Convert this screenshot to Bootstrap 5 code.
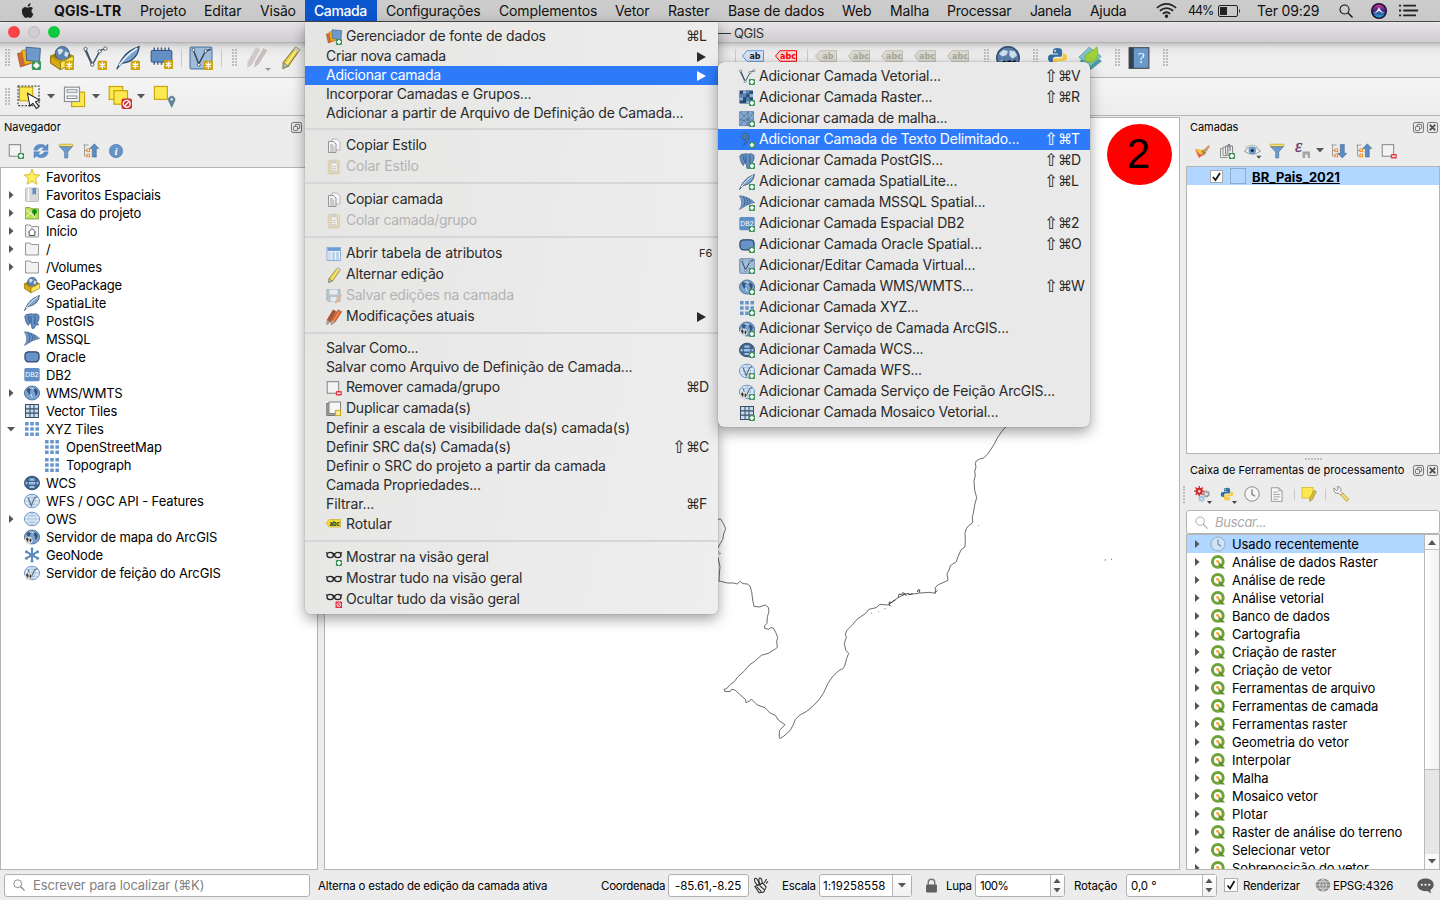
<!DOCTYPE html>
<html lang="pt-BR">
<head>
<meta charset="utf-8">
<title>QGIS</title>
<link rel="stylesheet" href="https://cdn.jsdelivr.net/npm/bootstrap@5.3.0/dist/css/bootstrap.min.css">
<style>
body{font:13px/18px Inter,"Noto Sans",sans-serif;color:#000;width:1440px;height:900px;overflow:hidden;background:#ececec}
svg{display:block;flex:none;overflow:visible}
.fit{display:inline-block;white-space:pre;flex:none}
.menubar{height:22px;background:linear-gradient(#cdcdcd,#c8c8c8);border-bottom:1px solid #4a4a4a;font-size:14px;line-height:22px;color:#111}
.menubar .on{background:#0a56cf;color:#fff;height:21px;width:72px;padding-left:9px;line-height:22px}
.titlebar{height:21px;background:linear-gradient(#e7e5e7,#cfcdcf);border-bottom:1px solid #b5b3b5;border-radius:5px 5px 0 0;color:#333}
.titlebar .fit{padding-top:2px}
.light{width:12px;height:12px;border-radius:50%;flex:none}
.tb1{height:35px;border-bottom:1px solid #b4b4b4;background:linear-gradient(#c4c4c4,#e4e4e4 5px,#efefef 14px,#ededed);padding-bottom:5px}
.tb2{height:38px;border-bottom:1px solid #b4b4b4;background:linear-gradient(#f5f5f5,#ececec)}
.lbl{margin-bottom:4px}
.grip{width:5px;height:17px;flex:none;background:radial-gradient(circle at 1px 1px,#bdbdbd .7px,transparent .9px) 0 0/3px 3px}
.vsep{width:1px;height:18px;background:#c9c9c9;flex:none}
.leftdock{width:318px}
.rightdock{width:254px}
.canvas-wrap{margin:1px 6px 0;width:856px;border:1px solid #b4b4b4;background:#fff;position:relative}
.dtitle{height:22px;font-size:11px;line-height:22px}
.ptools{height:29px;padding-bottom:3px}
.tree{background:#fff;border:1px solid #b4b4b4;overflow:hidden;min-height:0}
.trow{height:18px}
.trow.sel{background:#b1d6ff}
#layer .fit{padding-top:2px}
.searchbox{height:24px;background:#fff;border:1px solid #b4b4b4;border-radius:3px;color:#a9a9a9}
.vbar{width:15px;border-left:1px solid #b9b9b9;background:#fafafa;flex:none}
.vbar .cap{height:15px;border-bottom:1px solid #c4c4c4}
.vbar .thumb{height:220px;background:linear-gradient(90deg,#fff,#f1f1f1);border-bottom:1px solid #bbb}
.vbar .trough{background:#e6e6e6}
.status{height:30px;font-size:11.5px;line-height:30px}
.status .fit{padding-top:2px}
.status .field .fit{padding-top:1px}
.status .locator .fit{padding-top:0}
.field{height:23px;background:#fff;border:1px solid #b0b0b0;border-radius:3px;line-height:21px;flex:none}
.field .stepper{border-left:1px solid #b8b8b8;background:linear-gradient(#fff,#f1f1f1)}
.chk{width:14px;height:14px;background:#fff;border:1px solid #b0b0b0;flex:none}
.popup{position:absolute;font-size:14px;color:#2a2a2a;background:linear-gradient(100deg,#e5e5e3,#ebebeb 60%,#eee);border-radius:0 0 6px 6px;padding:4px 0;box-shadow:0 0 1px rgba(0,0,0,.5),0 5px 14px rgba(0,0,0,.38);z-index:5}
.popup .it{height:19px;padding-left:21px}
.popup .it.hi{height:21px}
.popup .fit,.popup .keys{padding-bottom:2px}
.popup .act{background:#2d7bfb;color:#fff}
.popup .dis{color:#b3b3b3}
.popup .dis svg{opacity:.55}
.popup .sp{height:12px;padding-top:5px}
.popup .sp div{height:2px;background:#d6d6d6}
.keys{font-family:Inter,"DejaVu Sans",sans-serif;display:inline-flex;align-items:center}
.keys i{font:14px/18px "DejaVu Sans",sans-serif;width:13px;text-align:center;display:inline-block}
.keys i.up{font-size:17px;width:14px}
.keys b{font-weight:400;display:inline-block}
.keys .fn{font-size:11px}
#m1{left:305px;top:22px;width:413px;height:592px}
#m2{left:718px;top:62px;width:372px;height:365px;border-radius:6px;background:#e9e9e9;z-index:6}
#m1 .keys b,#m2 .keys b{width:19px}
.step{position:absolute;left:782px;top:6px;width:65px;height:61px;border-radius:50%;background:#f00;font:42px/60px "Liberation Sans",Arial,sans-serif;text-align:center;padding-right:2px}
</style>
</head>
<body class="d-flex flex-column position-relative">
<svg width="0" height="0" class="position-absolute"><defs>
<g id="b-plus"><rect x="9.9" y="9.9" width="6.1" height="6.1" rx="1" fill="#3f935b"/><path d="M12.950 11v3.900M11 12.950h3.900" stroke="#fff" stroke-width="1.700"/></g>
<g id="b-star"><rect x="9.800" y="9.800" width="6.200" height="6.200" rx=".6" fill="#cfa30c"/><path d="M12.900 10.700v4.400M11 11.800l3.800 2.200M14.800 11.800l-3.800 2.200" stroke="#fff" stroke-width=".9"/></g>
<g id="b-min"><rect x="9.8" y="11" width="6" height="4.5" rx="1" fill="#e8384a"/><path d="M11 13.2h3.6" stroke="#fff" stroke-width="1.3"/></g>
<g id="b-ban"><rect x="9.500" y="9.500" width="6.500" height="6.500" rx=".5" fill="#e8283c"/><circle cx="12.800" cy="12.800" r="1.9" fill="none" stroke="#fff" stroke-width=".8"/><path d="M11.600 14.1l2.5-2.6" stroke="#fff" stroke-width=".8"/></g>
<g id="src"><path d="M.3 5l7-1.5 2 8-7 2.500z" fill="#cf6a35" stroke="#a04a20" stroke-width=".5"/><path d="M3 3l7-1 1 9-6 1.5z" fill="#f0b020" stroke="#b07a00" stroke-width=".5"/><path d="M6 .8L15.6 1.6 15 10.6 6.4 9.6z" fill="#6f99cb" stroke="#3a5c86" stroke-width=".6"/></g>
<g id="gpkg"><path d="M.4 6.5L7 11v4.8L.4 11.5z" fill="#dba90f" stroke="#7d5d00" stroke-width=".6"/><path d="M15.6 6.5L7 11v4.8l8.6-4.5z" fill="#fbe74d" stroke="#8c7a10" stroke-width=".6"/><path d="M.4 6.5L4 4.500h8l3.600 2L7 11z" fill="#a87f08"/><circle cx="8.2" cy="5" r="4.7" fill="#5c82af" stroke="#2f4e73" stroke-width=".5"/><path d="M5 2.5l2.5-.8L9 3 7.5 5 6 6zM10 3.5l2.5 1-1 3-2-1z" fill="#d5e2ee"/><path d="M.4 6.500L7 11l8.600-4.500L11 8.500 7.200 9.800 4.500 8.500z" fill="#dba90f"/></g>
<g id="vec"><path d="M2 2.6l4.2 10L11.2 3.4Q12.5 2.2 15 2" fill="none" stroke="#41576a" stroke-width="1"/><path d="M1.6 3l4.6 9.6" stroke="#41576a" stroke-width="1.2"/><g fill="#fff" stroke="#41576a" stroke-width=".6"><circle cx="1.7" cy="2" r="1.1"/><circle cx="11" cy="3.6" r="1.1"/><circle cx="14.9" cy="1.7" r="1.1"/><circle cx="6.2" cy="12.4" r="1.1"/></g></g>
<g id="fea"><path d="M.5 15.5Q3 10 4.5 8 8 3 15.4.4 15 5 12 8 9 11 4 11.5 2 13 .5 15.5z" fill="#7da3cf" stroke="#2d4b6c" stroke-width=".8"/><path d="M2 13Q7 6 14 1.5" fill="none" stroke="#e9f1f8" stroke-width="1"/></g>
<g id="chip"><path d="M3 1v12M5.5 1v12M8 1v12M10.500 1v12M13 1v12" stroke="#3a5f8e" stroke-width="1"/><rect x=".8" y="3.2" width="14.4" height="8" rx="1" fill="#6290c4" stroke="#34567f" stroke-width=".7"/></g>
<g id="virt"><rect x=".7" y=".7" width="14.6" height="14.6" rx=".8" fill="#9fbcda" stroke="#5b7ea5" stroke-width=".8"/><path d="M3 3l3.500 9L11 3.500l3.500-1.300" fill="none" stroke="#31465a" stroke-width="1"/><g fill="#fff" stroke="#41576a" stroke-width=".6"><circle cx="3" cy="2.6" r="1"/><circle cx="11" cy="3.400" r="1"/><circle cx="6.500" cy="12.500" r="1"/></g></g>
<g id="pen"><path d="M11.500.8l3 1.700L6.500 14l-3.700 1.600L3 11.500z" fill="#e8d44b" stroke="#8b7b24" stroke-width=".7"/><path d="M12.800 1.800L5 13" stroke="#fff5a0" stroke-width=".8"/><path d="M11.500.8l3 1.700-1.300 1.800-3-1.700z" fill="#ccc"/><path d="M3 11.500L2.800 15.600l3.700-1.600z" fill="#b8b8a8" stroke="#666" stroke-width=".4"/></g>
<g id="pens"><path d="M7 .9l3 1.500L4.200 13l-3.400 2.500.3-4.500z" fill="#b35532" stroke="#7c3a20" stroke-width=".5"/><path d="M12 .9l3.500 1.800L9 13l-4 2.800L6 11z" fill="#e8662f" stroke="#8f3a12" stroke-width=".6"/><path d="M13 2.500L7.200 13" stroke="#ff9b5a"/><path d="M6 11l-1 4.800L9 13zM1.100 11l-.3 4.500L4 13z" fill="#aaa"/></g>
<g id="gpens"><path d="M7 .9l3 1.500L4.200 13l-3.400 2.500.3-4.500z" fill="#cfc9c7"/><path d="M12 .9l3.500 1.800L9 13l-4 2.800L6 11z" fill="#c5c0be" stroke="#fff" stroke-width=".5"/></g>
<g id="sel"><rect x=".7" y=".7" width="14" height="13" fill="none" stroke="#444" stroke-width=".8" stroke-dasharray="1.300 .9"/><rect x="1.700" y="1.500" width="8.800" height="9" fill="#fce94f" stroke="#c9a50c" stroke-width=".7"/><path d="M7 5.500l1.600 8.500 2-1.800 2.300 3.400 1.700-1.200-2.300-3.300 2.700-1z" fill="#fff" stroke="#222" stroke-width=".7"/></g>
<g id="form"><rect x="6" y="5" width="9" height="10" fill="#fce94f" stroke="#c9a50c" stroke-width=".8"/><rect x="1" y="1.500" width="10.500" height="10" fill="#f4f4f4" stroke="#888f94" stroke-width=".8"/><path d="M2.500 4.200h7.500M2.500 8.500h7.500" stroke="#868d92" stroke-width="2.400"/><path d="M3.200 4.200h6.100M3.200 8.500h6.100" stroke="#fff" stroke-width="1"/></g>
<g id="desel"><rect x=".8" y="1" width="9" height="8.600" fill="#fce94f" stroke="#c9a50c" stroke-width=".8"/><rect x="4" y="3.800" width="9" height="9" fill="#fce94f" stroke="#c9a50c" stroke-width=".8"/><rect x="9" y="9" width="7" height="7" rx="1.400" fill="#d52b2b"/><circle cx="12.500" cy="12.500" r="2.300" fill="none" stroke="#fff" stroke-width=".9"/><path d="M11 14l3-3" stroke="#fff" stroke-width=".9"/></g>
<g id="loc"><rect x="1" y="1" width="9" height="9" fill="#fce94f" stroke="#c9a50c" stroke-width=".8"/><path d="M13 15.500L10.900 11a2.300 2.300 0 1 1 4.200 0z" fill="#64839a" stroke="#466478" stroke-width=".4"/><circle cx="13" cy="10" r=".8" fill="#fff"/></g>
<path id="dn" d="M0 0h8L4 4.500z" fill="#555"/>
<g id="newl"><rect x="1.200" y="1.700" width="11.500" height="11.500" fill="#f3f3f3" stroke="#777" stroke-width=".9"/></g>
<g id="ref"><path d="M.8 7.200Q1.500 1.500 7.800 1.300q3 0 4.700 1.700L15 1v6.300H8.800L10.900 5Q8 3 5.300 6 4.700 7.200 4 7.200zM15.200 8.800q-.7 5.700-7 5.900-3 0-4.700-1.700L1 15V8.700h6.200L5.100 11q2.900 2 5.600-1 .6-1.200 1.300-1.200z" fill="#5b90cb" stroke="#4377b1" stroke-width=".4"/></g>
<g id="fun"><path d="M1.200 1.200h13.600v2.300H1.200z" fill="#f7e463" stroke="#b19a20" stroke-width=".6"/><path d="M1.700 3.700h12.600L9.800 9v6l-3.200 0V9z" fill="#6d9ac9" stroke="#4c759f" stroke-width=".6"/></g>
<g id="colup"><path d="M.5 2h5M1.500 2v11h3M1.500 7.500h3" fill="none" stroke="#8a8a8a" stroke-width=".8"/><g fill="#fff" stroke="#f08a1c"><rect x="4" y="6" width="2.600" height="2.600"/><rect x="4" y="11.200" width="2.600" height="2.600"/></g><path d="M11.300.8l4.500 4.700h-2.500V14h-4V5.500H6.800z" fill="#5b8cc3" stroke="#33587f" stroke-width=".5"/></g>
<g id="exdn"><path d="M.5 2h5M1.500 2v11h3M1.500 7.500h3" fill="none" stroke="#8a8a8a" stroke-width=".8"/><g fill="#fff" stroke="#f08a1c"><rect x="4" y="6" width="2.600" height="2.600"/><rect x="4" y="11.200" width="2.600" height="2.600"/></g><path d="M11.300 15l4.500-4.700h-2.500V1.500h-4v8.800H6.800z" fill="#5b8cc3" stroke="#33587f" stroke-width=".5"/></g>
<g id="info"><circle cx="8" cy="8" r="6.700" fill="#6593c8" stroke="#4c78aa" stroke-width=".6"/><text x="8" y="12" font-family="Liberation Serif" font-size="11" font-weight="700" font-style="italic" fill="#fff" text-anchor="middle">i</text></g>
<path id="fav" d="M8 .3l2.200 5.300 5.600.4-4.300 3.700 1.400 5.600L8 12.300l-4.900 3 1.400-5.600L.2 6l5.600-.4z" fill="#fcee5a" stroke="#c4a31a" stroke-width=".7"/>
<g id="book"><rect x="1.500" y="1" width="13" height="13.500" rx="1" fill="#d9d9d9" stroke="#a9a9a9" stroke-width=".7"/><path d="M4.500 1v13" stroke="#fff" stroke-width="1.300"/><path d="M8.500 1h3.500v7L10.250 6.500 8.500 8z" fill="#5d8cc2"/></g>
<g id="proj"><path d="M1.500 14V2.500h4.500l1 1.200h7.500V14z" fill="#b9de52" stroke="#6b9422" stroke-width=".7"/><path d="M2 5l5 3 4 5M7 8l-5 4" stroke="#fff" fill="none" stroke-width=".8"/><circle cx="10.500" cy="6.500" r="2.500" fill="#159a1e"/><path d="M10.500 6v4.500" stroke="#0d6b14"/></g>
<path id="fold" d="M1.500 14V2h4.800l1 1.500h7.200V14z" fill="#f2f2f2" stroke="#7f7f7f" stroke-width=".8"/>
<g id="home"><use href="#fold"/><path d="M4.300 9.300L8 5.500l3.700 3.800M5.200 9v3.500h5.600V9" fill="#fff" stroke="#444" stroke-width=".9"/></g>
<g id="pg"><path d="M.8 3Q2 .7 5 1.200 7 .3 9 1.200 13-.2 15 2.500q.8 4-2.300 8.300l2 .3q-1.500 1.500-3.400 1l-.8 3-2.500.3-.8-5Q6 11 5.500 9.500l-1 3Q1.500 10 .8 3z" fill="#6290c4" stroke="#3a5c86" stroke-width=".8"/><path d="M5 2.500Q4 6 5.500 9M10.500 2.500q1.500 3 .3 6.500l-.3 2M7 3.500v6" fill="none" stroke="#27456a" stroke-width=".7"/></g>
<g id="ms"><path d="M.5.800Q8 1 15.700 7.500 9 8.500.5 14.500 5 8 .5.800z" fill="#6c97c8" stroke="#3f648f" stroke-width=".6"/><path d="M4 1.200q3.500 5 .5 10.500M7 2.200q3 4 .8 8M10 3.800q2 3 .7 5" fill="none" stroke="#2d4e74" stroke-width=".7"/></g>
<rect id="ora" x="1" y="2.800" width="14" height="10" rx="3.500" fill="#6793ca" stroke="#2b4765" stroke-width="1.300"/>
<g id="db2"><rect x=".3" y="1" width="15.400" height="13.300" rx="1.500" fill="#5f8fc6"/><text x="8" y="10" font-family="Inter" font-size="6.800" fill="#fff" text-anchor="middle">DB2</text></g>
<g id="wms"><ellipse cx="8" cy="8" rx="7.600" ry="7" fill="#7aa2d0" stroke="#41658e" stroke-width=".8"/><path d="M2.500 5Q4 2.500 7 2.800L7.500 4 6 5.500 6.200 8 5.300 10 4 7.500zM9.500 5l2-1.800 2.500 3-1 3.300-1.500 1.500-.5-3z" fill="#35547b"/><path d="M5.500 3.300q3-1.300 4 1M6.800 9l1.500 3.500" stroke="#d8e7f5" fill="none"/></g>
<g id="vt"><rect x="1" y="1" width="14" height="14" fill="#3b4e62"/><path d="M2 2h3.500v3.300H2zM6.500 2h3v3.300h-3zM10.500 2H14v3.300h-3.500zM2 6.500h3.500v3H2zM6.500 6.500h3v3h-3zM10.500 6.500H14v3h-3.500zM2 10.700h3.500V14H2zM6.500 10.700h3V14h-3zM10.500 10.700H14V14h-3.500z" fill="#c6dcf2"/></g>
<path id="xyz" d="M1 1h3.600v3.600H1zM6.200 1h3.600v3.600H6.200zM11.400 1H15v3.600h-3.600zM1 6.200h3.600v3.600H1zM6.200 6.200h3.600v3.600H6.200zM11.400 6.200H15v3.600h-3.600zM1 11.400h3.600V15H1zM6.200 11.400h3.600V15H6.200zM11.400 11.400H15V15h-3.600z" fill="#6796cb"/>
<g id="wcs"><ellipse cx="8" cy="8" rx="7.500" ry="6.800" fill="#41658f" stroke="#2d4864" stroke-width=".9"/><path d="M5.500 3.500h5v2.300h-5zM4.800 7h6.400v2.600H4.800zM5.500 11h5v2h-5zM1.500 7h2v2.300h-2zM12.500 7h2v2.300h-2z" fill="#9ec2e6"/></g>
<g id="ows"><ellipse cx="8" cy="8" rx="7.500" ry="6.800" fill="#e4eef9" stroke="#5e89bb" stroke-width=".9"/><path d="M.8 8h14.400M2 4.700h12M2 11.300h12M8 1.200v13.600M8 1.200q-7 6.800 0 13.600M8 1.200q7 6.800 0 13.600" fill="none" stroke="#8fb1d8" stroke-width=".6"/></g>
<g id="wfs"><use href="#ows"/><path d="M4 4.500l3.300 8L10.500 5l2.500-1.500" fill="none" stroke="#5a6c7d" stroke-width="1.100"/></g>
<g id="ags"><use href="#wms"/><circle cx="4.600" cy="11.300" r="3.700" fill="#ddd"/><path d="M1.800 9.800l2-1.500.8 2.500-.8 2.500zM6 9l1.700 1.800-1.200 2.800-1-1.500z" fill="#333"/></g>
<g id="agf"><use href="#wfs"/><circle cx="4.600" cy="11.300" r="3.700" fill="#ddd"/><path d="M1.800 9.800l2-1.500.8 2.500-.8 2.500zM6 9l1.700 1.800-1.200 2.800-1-1.500z" fill="#333"/></g>
<g id="gn"><path d="M8 .8v14.400M1.700 4.300l12.600 7.400M14.300 4.300L1.700 11.700" stroke="#5f8cbd" stroke-width="2"/><g fill="#5f8cbd"><circle cx="8" cy="8" r="2.500"/><circle cx="8" cy="2" r="1.500"/><circle cx="8" cy="14" r="1.500"/><circle cx="2.400" cy="4.800" r="1.500"/><circle cx="13.600" cy="4.800" r="1.500"/><circle cx="2.400" cy="11.200" r="1.500"/><circle cx="13.600" cy="11.200" r="1.500"/></g></g>
<g id="ras"><rect x=".5" y=".5" width="13.500" height="13" fill="#2b4a73"/><path d="M4 .5h3.300v3.300H4zM10.600 4h3.400v3.300h-3.400zM.5 7.300H4v3.300H.5zM7.300 10.500h3.300v3H7.300z" fill="#8fb4dc"/><path d="M7.300.5h3.300v3.300H7.300zM4 4h3.300v3.300H4zM7.300 7.300h3.300v3.200H7.300zM.5 4H4v3.300H.5z" fill="#5982b2"/></g>
<g id="mesh"><rect x=".7" y=".7" width="14" height="14" fill="#84a9d2" stroke="#55789f" stroke-width=".7"/><path d="M.7 9h14M9 .7v14M1 1l8 8 5.500-8M9 1L1 9M1 14l4-5 4 5.500" fill="none" stroke="#47698f" stroke-width=".7"/></g>
<path id="csv" d="M3.500 2Q7.500-.5 9.500 3.500q2 5.500-5 9.800 2.700-4 2.300-6Q3.200 8 2.600 5 2.500 3 3.500 2z" fill="#4a78ad" stroke="#2d4f78" stroke-width=".6"/>
<g id="copy"><path d="M6 1h5l3 3v8H6z" fill="#f6f6f6" stroke="#aaa" stroke-width=".8"/><path d="M2.500 3.500h5l2.500 2.500v8.500H2.500z" fill="#f3f3f3" stroke="#8a8a8a" stroke-width=".9"/><path d="M4 7h3M4 9h4.500M4 11h4.500M4 13h4.500" stroke="#999" stroke-width=".9"/></g>
<g id="paste"><rect x="2.300" y="1.500" width="11" height="13.500" rx="1" fill="#ead09a" stroke="#c9aa6a" stroke-width=".8"/><path d="M5 3.500h4l2.500 2.500v7H5z" fill="#f5f5f5" stroke="#999" stroke-width=".7"/><rect x="5.500" y=".5" width="4.600" height="2.500" fill="#bbb"/><path d="M6 7.500h4M6 9.500h4M6 11.500h4" stroke="#aaa" stroke-width=".8"/></g>
<g id="tab"><rect x="1" y="1.500" width="13.500" height="13" fill="#edf3fa" stroke="#7ba0cf" stroke-width=".8"/><rect x="1.500" y="2" width="12.500" height="3" fill="#6e9fd8"/><path d="M2.500 7h2M6 7h3M10 7h3M2.500 9h2M6 9h3M10 9h3M2.500 11h2M6 11h3M10 11h3M2.500 13h2M6 13h3M10 13h3" stroke="#8fb2dc" stroke-width="1"/></g>
<g id="save"><path d="M.8 1.500H14v12H2.500L.8 12z" fill="#8fa9bb" stroke="#6d8798" stroke-width=".8"/><path d="M3.500 1.500h8v5h-8zM4.500 9h6v4.500h-6z" fill="#e5ecf0"/><path d="M14 6l2 1-4.500 7.500L9 16l.5-3z" fill="#ea8a5a"/></g>
<g id="dup"><rect x=".8" y="2.500" width="10" height="12" fill="#a3a59a" stroke="#555" stroke-width=".7"/><rect x="3" y="1" width="11.500" height="11.500" fill="#f6f6f6" stroke="#777" stroke-width=".9"/><rect x="9.500" y="9.500" width="5" height="5" fill="#fbf0a8" stroke="#d2ad14" stroke-width="1.200"/></g>
<g id="tag"><path d="M.3 6.300L3 2.500h11.500v7.500H3z" fill="#f1de35" stroke="#c0a51c" stroke-width=".6"/><text x="8.700" y="8.500" font-family="Inter" font-weight="800" font-size="5.500" text-anchor="middle" fill="#333">abc</text></g>
<g id="spec"><g fill="none" stroke="#222" stroke-width="1.300"><ellipse cx="4.200" cy="5" rx="3.200" ry="2.600"/><ellipse cx="11.800" cy="5" rx="3.200" ry="2.600"/><path d="M7 4q1-.8 2 0M0 2.500l1.700 1M16 2.500l-1.700 1"/></g></g>
<g id="spec2"><g transform="translate(0 3)"><use href="#spec"/></g></g>
<g id="brush"><path d="M1 6l5 1 3 5-4 3Q3 11 1 6z" fill="#ee5a4c"/><path d="M1 6l6 .5 2 4-3 1z" fill="#f6c83a"/><path d="M7 7.500l3-1 2.500 2.500-3 4z" fill="#b98746"/><path d="M9 8l5.500-5.500 1 1L11 10z" fill="#d0a468" stroke="#8a5f28" stroke-width=".4"/></g>
<g id="grp"><path d="M1.500 5.500v9h7M4 4v8.500h6M4 5.500H1.500M6.500 4H4" fill="none" stroke="#888" stroke-width=".9"/><path d="M6.500 3h7v8h-7z" fill="#eee" stroke="#777" stroke-width=".9"/><path d="M8.800 10V2.500Q9.900-.5 11 2.500V8" fill="none" stroke="#4b5b68" stroke-width=".9"/></g>
<g id="eye"><path d="M.3 8.500Q7 .8 15.500 8.500 8 14.500.3 8.500z" fill="#f5f5f5" stroke="#8f8f8f" stroke-width=".9"/><circle cx="7.800" cy="8" r="3.500" fill="#6a9bd0"/><circle cx="7.800" cy="8" r="1.500" fill="#1d2f44"/><path d="M1 5.500Q7 .5 13.500 5" fill="none" stroke="#aaa" stroke-width=".7"/><path d="M11.500 13h5L14 15.800z" fill="#555"/></g>
<g id="eps"><text x="0" y="9" font-family="Liberation Serif" font-size="18" font-style="italic" fill="#6c3f78" stroke="#6c3f78" stroke-width=".4">ε</text><path d="M7.500 8.500H15V15h-2.200v-3.500h-2.600V15H7.500z" fill="#a5a5a5"/></g>
<g id="py"><path d="M8 .8Q4.500.8 4.500 3v2h4v.8H3Q.8 5.800.8 8.500t2.200 3h1.500V9.500Q4.500 7.500 6.500 7.500H10q1.500 0 1.500-1.500V3Q11.500.8 8 .8z" fill="#376fa2"/><path d="M8 15.300q3.500 0 3.500-2v-2h-4v-.8H13q2.200 0 2.200-2.700T13 4.800h-1v2q0 2-2 2H6.200Q4.500 8.800 4.500 10.300v3q0 2 3.500 2z" fill="#fccd3c"/><circle cx="6.200" cy="2.900" r=".7" fill="#fff"/></g>
<g id="gear"><g stroke="#d02a2a"><circle cx="5.200" cy="5.200" r="2.500" fill="none" stroke-width="2"/><path d="M5.200 0v10.400M0 5.200h10.400M1.500 1.500l7.400 7.400M8.900 1.500L1.500 8.900" stroke-width="1.300"/></g><circle cx="5.200" cy="5.200" r="1.200" fill="#eee"/><circle cx="12.300" cy="8" r="2.400" fill="none" stroke="#8f8f8f" stroke-width="2" stroke-dasharray="1.500 .4"/><circle cx="7.500" cy="12.800" r="2" fill="none" stroke="#8fb3dc" stroke-width="2" stroke-dasharray="1.400 .4"/></g>
<g id="clk"><circle cx="8" cy="8" r="7.200" fill="#f5f5f5" stroke="#8b8b8b" stroke-width="1"/><path d="M8 3.500V8.300l3 2" fill="none" stroke="#7b7b7b" stroke-width="1.300"/></g>
<g id="clkb"><circle cx="8" cy="8" r="7" fill="#cfe3f7" stroke="#8ea5bb" stroke-width=".9"/><path d="M8 3.500V8.300l3 2" fill="none" stroke="#71879c" stroke-width="1.100"/></g>
<g id="doc"><path d="M2.500.8h8l3.500 3.500v11h-11.500z" fill="#f7f7f7" stroke="#8d8d8d" stroke-width=".9"/><path d="M10.500.8v3.500H14M4.500 5.500h5M4.500 8h7.500M4.500 10.500h7.500M4.500 13h5" fill="none" stroke="#999" stroke-width=".9"/></g>
<g id="note"><rect x="1" y="1.500" width="11" height="10.500" fill="#fce94f" stroke="#cdb22a" stroke-width=".7"/><path d="M13 4.500l2.300 1-4 8-2.500 2-.2-3z" fill="#d9c042" stroke="#93822a" stroke-width=".6"/></g>
<g id="wr"><path d="M.8 1.800L3.500 4.500 5 3.500 4.500.500Q8.500.500 8 5.500L10 7.500 8 9.500 6 7.500Q0 7.500.8 1.800z" fill="#f1f1f1" stroke="#7b7b7b" stroke-width=".8"/><path d="M7.800 9.200l2-2 6 6-2 2.200z" fill="#f5dd6b" stroke="#a38a2d" stroke-width=".7"/></g>
<g id="q"><circle cx="7.800" cy="7.800" r="5.400" fill="#fff" stroke="#6fa336" stroke-width="3"/><path d="M9.500 8.500l5.500 6h-4L8.500 11z" fill="#5c9130"/><path d="M7 7l1.500-.3L10 9.300l-1.500 1z" fill="#f08e2a"/><circle cx="7.400" cy="7.300" r="1.300" fill="#f5a62b"/></g>
<g id="leaf"><path d="M1 10L8 5l8 5-7.500 6z" fill="#4e9ba1"/><path d="M.6 7.500L7.500.8 15.500 7 8.500 13.500z" fill="#7fc4c9" stroke="#4c979d" stroke-width=".5"/><path d="M5 10Q3.500 6 8 4 11 2.500 12.500.5q2 6-1 9-3 2.500-6.500.5z" fill="#9fd13a" stroke="#6fa31d" stroke-width=".4"/></g>
<g id="globe"><circle cx="8" cy="8" r="7.500" fill="#5a7fac" stroke="#2d4764" stroke-width=".9"/><path d="M2 5l3-2.500 3 1-1 2.500-3 1zM9 3l3.500.5 1.500 3-3 2-2-2zM3 9l3 1v3z" fill="#cfdeec"/><path d="M3.500 11l1.500-1.500 2 1 2-1 2 1 2-1.500V13H4z" fill="#111"/></g>
<g id="help"><rect x=".8" y=".5" width="14.400" height="15" fill="#6b97c9" stroke="#444c55" stroke-width=".8"/><path d="M.8.5h3.400v15H.8z" fill="#32424f"/><text x="9.700" y="11.800" font-family="Liberation Serif" font-size="11" fill="#fff" text-anchor="middle">?</text></g>
<g id="mag" fill="none" stroke="currentColor"><circle cx="6.300" cy="6.300" r="5.200" stroke-width="1.200"/><path d="M10 10l5.500 5.500" stroke-width="1.500"/></g>
<g id="wifi" fill="none" stroke="#222" stroke-width="1.700"><path d="M-1 5.500q9-7.500 18 0M1.800 8.300q6.200-5 12.400 0M4.600 11q3.400-2.700 6.800 0"/><circle cx="8" cy="13.300" r=".8" fill="#222"/></g>
<path id="apple" d="M11.300.3q.1 1.500-.8 2.600T8.200 4Q8 2.600 9 1.500 10 .4 11.300.3zM14.200 11.700Q13.400 14 12.300 15.200q-1 1-2.200.4-1.700-.8-3.300 0-1.200.6-2.200-.4Q1.400 11.500 2 7.500 2.700 4.700 5.200 4.300q1.200 0 2.400.6.600.2 1.300-.1Q12 3.300 13.900 5.600q-1.900 1.200-1.700 3.300.2 2 2 2.800z" fill="#222"/>
<g id="rabbit" fill="#eee" stroke="#222" stroke-width="1.100"><ellipse cx="4" cy="4" rx="1.700" ry="4" transform="rotate(-28 4 4)"/><ellipse cx="8" cy="3.500" rx="1.600" ry="3.600" transform="rotate(-12 8 3.500)"/><path d="M2 9l8.500-3.500 3.500 4-2.500 5.500-5 .8z"/><path d="M4 9.500l5 5M7 8l5 4.500M12 5l2.500-4M14 6l2-2.500" fill="none"/></g>
<g id="lock"><path d="M4.500 8V4.800a3.500 3.500 0 0 1 7 0V8" fill="none" stroke="#777" stroke-width="1.500"/><rect x="2.200" y="7" width="11.600" height="8.500" rx="1" fill="#606060"/></g>
<g id="crs"><ellipse cx="8" cy="8" rx="7.300" ry="6.500" fill="#858585"/><path d="M.7 8h14.600M2 4.800h12M2 11.200h12M8 1.500v13M8 1.500q-7 6.500 0 13M8 1.500q7 6.500 0 13" fill="none" stroke="#e2e2e2" stroke-width=".8"/></g>
<g id="chat"><path d="M8 1.500c4.500 0 7.700 2.500 7.700 5.900 0 2.200-1.200 3.800-3.200 4.800l.8 3.300-3.500-2.300C4 13.900.3 11.200.3 7.400.3 4 3.500 1.500 8 1.500z" fill="#5a5a5a"/><g fill="#fff"><circle cx="4.500" cy="7.300" r="1"/><circle cx="8" cy="7.300" r="1"/><circle cx="11.500" cy="7.300" r="1"/></g></g>
<g id="float"><rect x=".7" y=".7" width="14.600" height="14.600" rx="2.500" fill="none" stroke="#666" stroke-width="1.300"/><rect x="6" y="3.500" width="6.500" height="6" rx="1" fill="none" stroke="#666" stroke-width="1.300"/><rect x="3.500" y="6.500" width="6" height="6" rx="1" fill="#ececec" stroke="#666" stroke-width="1.300"/></g>
<g id="close"><rect x=".7" y=".7" width="14.600" height="14.600" rx="2.500" fill="none" stroke="#666" stroke-width="1.300"/><path d="M4 4l8 8M12 4l-8 8" stroke="#555" stroke-width="2.600"/></g>
<linearGradient id="sg" x1="0" y1="0" x2="0" y2="1"><stop offset="0" stop-color="#d0329a"/><stop offset=".5" stop-color="#3a2a80"/><stop offset="1" stop-color="#25b2e0"/></linearGradient>
<g id="siri"><circle cx="8" cy="8" r="8" fill="#1b1233"/><circle cx="8" cy="8" r="6.400" fill="url(#sg)"/><path d="M2.500 10Q6 9 8 4q2 5 5.500 6Q10 10 8 8q-2 2-5.500 2z" fill="#d8f3ff"/></g>
<g id="lst" stroke="#222" stroke-width="1.700"><path d="M0 3.500h2M0 8h2M0 12.500h2M4 3.500h12M4 8h14M4 12.500h12"/></g>
</defs></svg>

<nav class="menubar d-flex flex-shrink-0" id="bar"></nav>
<div class="titlebar d-flex align-items-center flex-shrink-0" id="title"></div>
<div class="tb1 d-flex align-items-center flex-shrink-0" id="t1"></div>
<div class="tb2 d-flex align-items-center flex-shrink-0" id="t2"></div>

<main class="d-flex" style="height:754px">
  <aside class="leftdock d-flex flex-column">
    <div class="dtitle d-flex align-items-center" id="lt"></div>
    <div class="ptools d-flex align-items-center" id="lp"></div>
    <div class="tree flex-grow-1" id="nav"></div>
  </aside>
  <section class="canvas-wrap">
    <svg width="854" height="751" viewBox="325 118 854 751">
      <g transform="translate(700 420) scale(.33333)" fill="none" stroke="#555" stroke-width="2.600" stroke-linejoin="round">
        <path d="M920 18L905 35 893 52 883 72 872 89 862 103 851 114 839 117 829 123 826 130 828 141 824 155 826 165 822 184 824 210 830 233 824 255 820 280 817 290 818 308 806 317 799 326 795 340 796 362 795 380 783 390 774 410 769 425 751 437 747 450 741 462 744 481 729 488 715 494 706 502 706 520 690 517 660 519 634 523 618 521 600 530 584 540 570 551 560 555 540 553 528 563 507 568 497 580 472 597 455 617 441 631 436 642 439 652 433 670 437 690 446 700 440 715 435 735 430 745 415 753 397 771 384 790 371 818 358 838 341 856 320 874 300 885 286 898 280 914 270 932 252 948 240 956 238 952 238 932 255 914 246 908 235 900 226 886 210 879 195 863 172 855 154 837 149 843 138 848 136 838 118 822 105 810 94 808 90 815 74 814 72 808 80 806 90 794 103 785 112 772 134 752 148 735 163 725 184 706 205 700 226 687 232 682 230 665 233 652 227 637 220 624 212 623 206 628 194 625 194 617 201 610 202 590 207 575 205 562 196 555 178 561 162 559 158 540 155 515 150 498 142 492 129 491 120 484 112 492 100 489 82 489 62 484 57 484 59 450 60 440 54 412"/>
        <path d="M54 384L61 370 68 359 71 342 77 326 70 310 62 297 54 298M54 394l4 4M57 402l5-2"/>
        <path d="M568 558l0-12 8 2 4-6 6 0M594 532l4-10 6 2 4-6 8 4 3 6M606 526l8-4M622 520l8 4 8-4M652 516l2-6 6 0-3 8M704 518l8-6" stroke="#333"/>
        <path d="M835 316l2 2M1214 420h4M1233 418h3M514 580h2M535 574h2M553 566h3M568 557h4"/>
      </g>
    </svg>
    <div class="step">2</div>
  </section>
  <aside class="rightdock d-flex flex-column">
    <div class="dtitle d-flex align-items-center" id="rt"></div>
    <div class="ptools d-flex align-items-center" id="rp"></div>
    <div class="tree flex-shrink-0" style="height:288px">
      <div class="trow sel d-flex align-items-center" id="layer"></div>
    </div>
    <div class="d-flex justify-content-center pt-1 flex-shrink-0" style="height:5px"><div class="grip" style="width:17px;height:2px"></div></div>
    <div class="dtitle d-flex align-items-center flex-shrink-0" id="ct"></div>
    <div class="ptools d-flex align-items-center flex-shrink-0" id="cp" style="margin-left:-3px"></div>
    <div class="searchbox d-flex align-items-center flex-shrink-0" id="busca"></div>
    <div class="tree d-flex flex-grow-1">
      <div class="flex-grow-1 overflow-hidden" id="algs"></div>
      <div class="vbar d-flex flex-column">
        <div class="cap d-flex justify-content-center align-items-center"><svg width="8" height="5"><path d="M0 5h8L4 0z" fill="#555"/></svg></div>
        <div class="thumb"></div><div class="trough flex-grow-1"></div>
        <div class="cap border-0 d-flex justify-content-center align-items-center"><svg width="8" height="5"><use href="#dn"/></svg></div>
      </div>
    </div>
  </aside>
</main>
<footer class="status d-flex align-items-center flex-shrink-0" id="st"></footer>

<div class="popup" id="m1"></div>
<div class="popup" id="m2"></div>

<script src="https://cdn.jsdelivr.net/npm/bootstrap@5.3.0/dist/js/bootstrap.bundle.min.js"></script>
<script>
const $ = id => document.getElementById(id);
const badge = {'+':'b-plus','*':'b-star','-':'b-min','x':'b-ban'};
// an icon name may carry a badge after a colon, as in "vec:+"
function ico(name, w = 16, h = w) {
  const [n, b] = name.split(':');
  return `<svg width="${w}" height="${h}" viewBox="0 0 16 16"><use href="#${n}"/>${b ? `<use href="#${badge[b]}"/>` : ''}</svg>`;
}
const txt = (s, w, cls = '') => `<span class="fit ${cls}" data-w="${w}">${s}</span>`;
const G = '<div class="grip"></div>', V = '<div class="vsep"></div>';
const DN = '<svg width="8" height="5"><use href="#dn"/></svg>';
// lays [x, width, html] cells out in a flex strip, leaving the gaps between them
function strip(el, x0, cells) {
  let p = x0;
  el.innerHTML = cells.map(([x, w, h]) => { const m = x - p; p = x + w;
    return `<div class="d-flex align-items-center flex-shrink-0" style="margin-left:${m}px;width:${w}px">${h}</div>`; }).join('');
}
const lab = (s, c, f, t) => `<svg class="lbl" width="22" height="12" viewBox="0 0 22 12"><path d="M.5 6L5 .7h16.500v10.600H5z" fill="${f}" stroke="${c}"/><text x="13" y="9" font-family="DejaVu Sans" font-weight="700" font-size="8" text-anchor="middle" fill="${t}">${s}</text></svg>`;

strip($('bar'), 0, [[20,15,ico('apple',15)],
 ...[['QGIS-LTR',54,67,'fw-bold'],['Projeto',140,46],['Editar',204,37],['Visão',260,35.500]].map(([s,x,w,c]) => [x,w,txt(s,w,c)]),
 [305,72,`<div class="on">${txt('Camada',52.500,'fw-medium')}</div>`],
 ...[['Configurações',386,94],['Complementos',499,98],['Vetor',615,34],['Raster',668,41],['Base de dados',728,96],['Web',842,29],['Malha',890,39],['Processar',947,64],['Janela',1030,41],['Ajuda',1090,36]].map(([s,x,w,c]) => [x,w,txt(s,w,c)]),
 [1158,18,ico('wifi',17)],[1188,25,`<span style="font-size:12.5px">${txt('44%',25)}</span>`],
 [1218,23,'<svg width="23" height="12"><rect x=".5" y=".5" width="19" height="11" rx="1.500" fill="none" stroke="#222"/><rect x="2" y="2" width="7" height="8" fill="#222"/><path d="M21 4q2 2 0 4z" fill="#222"/></svg>'],
 [1257,62,txt('Ter 09:29',62)],[1339,15,ico('mag',14)],[1371,16,ico('siri',16)],[1399,18,ico('lst',17)]]);
strip($('title'), 0, [[8,12,'<i class="light" style="background:#fc4348"></i>'],[28,12,'<i class="light" style="background:#d0ced0;border:1px solid #bdbbbd"></i>'],[48,12,'<i class="light" style="background:#0dc940"></i>'],[718,46,txt('— QGIS',45.500)]]);
const gl = s => lab(s,'#bdbcb2','#dcdbd0','#aaa99f');
strip($('t1'), 0, [[5,5,G],[17,24,ico('src:+',24)],[50,24,ico('gpkg:*',24)],[83,24,ico('vec:*',24)],[116,24,ico('fea:*',24)],[150,24,ico('chip:*',23)],[181,1,V],[189,24,ico('virt:*',24)],[221,1,V],[232,5,G],[246,22,ico('gpens',23)],[265,8,'<svg width="6" height="4" class="mt-4"><path d="M0 0h6L3 3z" fill="#999"/></svg>'],[279,22,ico('pen',23)],
 [735,1,V],[742,22,lab('ab','#5f96d8','#d3e4f8','#222')],[775,22,lab('abc','#f00','#fbd5d5','#f00')],[807,1,V],[815,22,gl('ab')],[848,22,gl('abc')],[881,22,gl('abc')],[914,22,gl('abc')],[947,22,gl('abc')],[984,5,G],[996,24,ico('globe',24)],[1033,5,G],[1047,21,ico('py',21)],[1078,24,ico('leaf',24)],[1115,5,G],[1128,22,ico('help',22)],[1163,5,G]]);
strip($('t2'), 0, [[5,5,G],[17,24,ico('sel',24)],[47,8,DN],[63,22,ico('form',23)],[92,8,DN],[108,24,ico('desel',24)],[137,8,DN],[153,23,ico('loc',23)]]);
strip($('lt'), 0, [[4,57,txt('Navegador',56.500)],[291,11,ico('float',11)]]);
strip($('lp'), 0, [[8,16,ico('newl:+',16)],[33,16,ico('ref',16)],[58,16,ico('fun',16)],[83,16,ico('colup',16)],[108,16,ico('info',16)]]);
strip($('rt'), 1186, [[1190,48,txt('Camadas',48)],[1413,11,ico('float',11)],[1427,11,ico('close',11)]]);
strip($('rp'), 1186, [[1194,16,ico('brush',16)],[1219,16,ico('grp:+',16)],[1244,16,ico('eye',17)],[1269,16,ico('fun',16)],[1295,16,ico('eps',16)],[1316,8,DN],[1331,16,ico('exdn',16)],[1356,16,ico('colup',16)],[1381,16,ico('newl:-',16)]]);
strip($('layer'), 1187, [[1210,13,'<svg width="13" height="13"><rect x=".5" y=".5" width="12" height="12" fill="#fff" stroke="#aaa"/><path d="M3 7l2.500 3L10 3" fill="none" stroke="#111" stroke-width="1.700"/></svg>'],[1230,16,'<svg width="16" height="16"><rect x=".5" y=".5" width="15" height="15" fill="#b1d6ff" stroke="#8eaccd"/></svg>'],[1252,88,txt('BR_Pais_2021',87.500,'fw-bold text-decoration-underline')]]);
strip($('ct'), 1186, [[1190,214,txt('Caixa de Ferramentas de processamento',214)],[1413,11,ico('float',11)],[1427,11,ico('close',11)]]);
strip($('cp'), 1183, [[1183,2,'<div class="grip" style="width:2px"></div>'],[1194,16,ico('gear',16)],[1207,4,'<svg width="5" height="3" class="mt-3"><path d="M0 0h5L2.500 3z" fill="#444"/></svg>'],[1220,14,ico('py',14)],[1232,5,'<svg width="5" height="3" class="mt-3"><path d="M0 0h5L2.500 3z" fill="#444"/></svg>'],[1244,16,ico('clk',16)],[1269,16,ico('doc',15)],[1294,1,'<div class="vsep" style="height:11px"></div>'],[1301,16,ico('note',16)],[1325,1,'<div class="vsep" style="height:11px"></div>'],[1333,16,ico('wr',16)]]);
strip($('busca'), 1187, [[1195,13,ico('mag',13)],[1215,52,`<em>${txt('Buscar...',51)}</em>`]]);

const tri = '<svg width="5" height="8"><path d="M0 0v8l4.500-4z" fill="#555"/></svg>';
const branch = (id, x0, tx, ix, rows, ax) => { $(id).innerHTML = rows.map(() => '<div class="trow d-flex align-items-center"></div>').join('');
  rows.forEach(([a, ic, s, end, ind = 0], i) => { const r = $(id).children[i];
    strip(r, x0, [...(a ? [[a == 2 ? ax - 2 : ax, a == 2 ? 8 : 5, a == 2 ? DN : tri]] : []), [ix + ind, 16, ico(ic)], [tx + ind, end - tx - ind, txt(s, end - tx - ind)]]); }); };
branch('nav', 1, 46, 24, [[0,'fav','Favoritos',100.500],[1,'book','Favoritos Espaciais',160.500],[1,'proj','Casa do projeto',141],[1,'home','Início',77],[1,'fold','/',50],[1,'fold','/Volumes',101.500],[0,'gpkg','GeoPackage',121.500],[0,'fea','SpatiaLite',106],[0,'pg','PostGIS',94],[0,'ms','MSSQL',90],[0,'ora','Oracle',85.500],[0,'db2','DB2',71],[1,'wms','WMS/WMTS',122],[0,'vt','Vector Tiles',117],[2,'xyz','XYZ Tiles',103.500],[0,'xyz','OpenStreetMap',161.500,20],[0,'xyz','Topograph',131,20],[0,'wcs','WCS',75.500],[0,'wfs','WFS / OGC API - Features',203.500],[1,'ows','OWS',76],[0,'ags','Servidor de mapa do ArcGIS',217],[0,'gn','GeoNode',102.500],[0,'agf','Servidor de feição do ArcGIS',220.500]], 9);
branch('algs', 1187, 1232, 1210, [['Usado recentemente',1358.500],['Análise de dados Raster',1377.500],['Análise de rede',1325],['Análise vetorial',1323.500],['Banco de dados',1329.500],['Cartografia',1300],['Criação de raster',1336],['Criação de vetor',1331.500],['Ferramentas de arquivo',1375],['Ferramentas de camada',1378],['Ferramentas raster',1347],['Geometria do vetor',1348.500],['Interpolar',1290.500],['Malha',1268],['Mosaico vetor',1317.500],['Plotar',1267.500],['Raster de análise do terreno',1402],['Selecionar vetor',1330],['Sobreposição do vetor',1368.500]].map(([s, e], i) => [1, i ? 'q' : 'clkb', s, e]), 1195);
$('algs').firstChild.classList.add('sel');

const arrows = '<svg width="9" height="15" class="mx-auto"><path d="M.5 5h7L4 .5zM.5 10h7L4 14.500z" fill="#555"/></svg>';
const field = (w, s, tw, pad, right, rw) => `<div class="field d-flex" style="width:${w}px;padding-left:${pad}px">${txt(s, tw)}${right ? `<div class="stepper ms-auto d-flex align-items-center justify-content-center" style="width:${rw}px">${right}</div>` : ''}</div>`;
strip($('st'), 0, [[4,306,`<div class="field locator w-100 d-flex align-items-center" style="color:#808080;font-size:13px;padding-left:8px">${ico('mag',12)}<span style="width:8px"></span>${txt('Escrever para localizar (⌘K)',171)}</div>`],
 [318,229,txt('Alterna o estado de edição da camada ativa',229)],[601,64,txt('Coordenada',64)],[668,81,field(81,'-85.61,-8.25',66,6)],[753,16,ico('rabbit',15)],[782,34,txt('Escala',33.500)],[819,93,field(93,'1:19258558',62,3,DN,19)],[924,14,ico('lock',15)],[946,26,txt('Lupa',25.500)],[975,90,field(90,'100%',28,4,arrows,14)],[1074,43,txt('Rotação',43)],[1126,91,field(91,'0,0 °',25,4,arrows,14)],
 [1224,14,'<div class="chk"><svg width="12" height="12"><path d="M2.500 6.500L5 9.500 9.500 2" fill="none" stroke="#111" stroke-width="1.700"/></svg></div>'],[1243,56.500,txt('Renderizar',56.500)],[1315,15,ico('crs',16)],[1333,60,txt('EPSG:4326',60)],[1417,16,ico('chat',17)]]);

// menu rows: [icon, label, width, shortcut modifiers, shortcut key, state]; "-" is a separator
function menu(el, rows) {
  el.innerHTML = rows.map(r => {
    if (r === '-') return '<div class="sp"><div></div></div>';
    const [ic, s, w, mod, key, st = ''] = r;
    let right = '';
    if (mod === '>') right = '<svg width="9" height="10" class="ms-auto" style="margin-right:12px"><path d="M0 0v10l9-5z" fill="currentColor"/></svg>';
    else if (key) right = `<span class="keys ms-auto">${[...mod].map(m => `<i${m === '⇧' ? ' class="up"' : ''}>${m}</i>`).join('')}<b${key.length > 1 ? ' class="fn"' : ''}>${key}</b></span>`;
    return `<div class="it d-flex align-items-center ${ic ? 'hi' : ''} ${st}">${ic ? ico(ic) + '<span style="width:4px"></span>' : ''}${txt(s, w)}${right}</div>`;
  }).join('');
}
menu($('m1'), [['src:+','Gerenciador de fonte de dados',199.500,'⌘','L'],['','Criar nova camada',119.500,'>'],['','Adicionar camada',114.500,'>',0,'act'],['','Incorporar Camadas e Grupos...',205],['','Adicionar a partir de Arquivo de Definição de Camada...',357],'-',
 ['copy','Copiar Estilo',80.500],['paste','Colar Estilo',72.500,'','','dis'],'-',['copy','Copiar camada',96.500],['paste','Colar camada/grupo',130.500,'','','dis'],'-',
 ['tab','Abrir tabela de atributos',156,'','F6'],['pen','Alternar edição',97.500],['save','Salvar edições na camada',167.500,'','','dis'],['pens','Modificações atuais',128,'>'],'-',
 ['','Salvar Como...',92],['','Salvar como Arquivo de Definição de Camada...',306],['newl:-','Remover camada/grupo',153.500,'⌘','D'],['dup','Duplicar camada(s)',124.500],['','Definir a escala de visibilidade da(s) camada(s)',303.500],['','Definir SRC da(s) Camada(s)',184.500,'⇧⌘','C'],['','Definir o SRC do projeto a partir da camada',279.500],['','Camada Propriedades...',154.500],['','Filtrar...',48],['tag','Rotular',45.500],'-',
 ['spec:+','Mostrar na visão geral',142.500],['spec2','Mostrar tudo na visão geral',176],['spec:x','Ocultar tudo da visão geral',173.500]].map(r => r[1] === 'Filtrar...' ? [...r, '⌘', 'F'] : r));
const A = 'Adicionar ';
menu($('m2'), [['vec:+',A+'Camada Vetorial...',181.500,'⇧⌘','V'],['ras:+',A+'Camada Raster...',173,'⇧⌘','R'],['mesh:+',A+'camada de malha...',188],['csv:+',A+'Camada de Texto Delimitado...',260,'⇧⌘','T','act'],['pg:+',A+'Camada PostGIS...',183.500,'⇧⌘','D'],['fea:+',A+'camada SpatialLite...',198,'⇧⌘','L'],['ms:+',A+'camada MSSQL Spatial...',226],['db2:+',A+'Camada Espacial DB2',205,'⇧⌘','2'],['ora:+',A+'Camada Oracle Spatial...',222.500,'⇧⌘','O'],['virt:+','Adicionar/Editar Camada Virtual...',216],['wms:+',A+'Camada WMS/WMTS...',214,'⇧⌘','W'],['xyz:+',A+'Camada XYZ...',159],['ags:+',A+'Serviço de Camada ArcGIS...',249.500],['wcs:+',A+'Camada WCS...',164],['wfs:+',A+'Camada WFS...',162.500],['agf:+',A+'Camada Serviço de Feição ArcGIS...',295.500],['vt:+',A+'Camada Mosaico Vetorial...',239]]);

// tighten or loosen each label to its own width
document.querySelectorAll('.fit').forEach(e => {
  const n = e.textContent.length, w = e.getBoundingClientRect().width;
  e.style.letterSpacing = ((+e.dataset.w + .3 - w) / n).toFixed(3) + 'px';
});
</script>
</body>
</html>
